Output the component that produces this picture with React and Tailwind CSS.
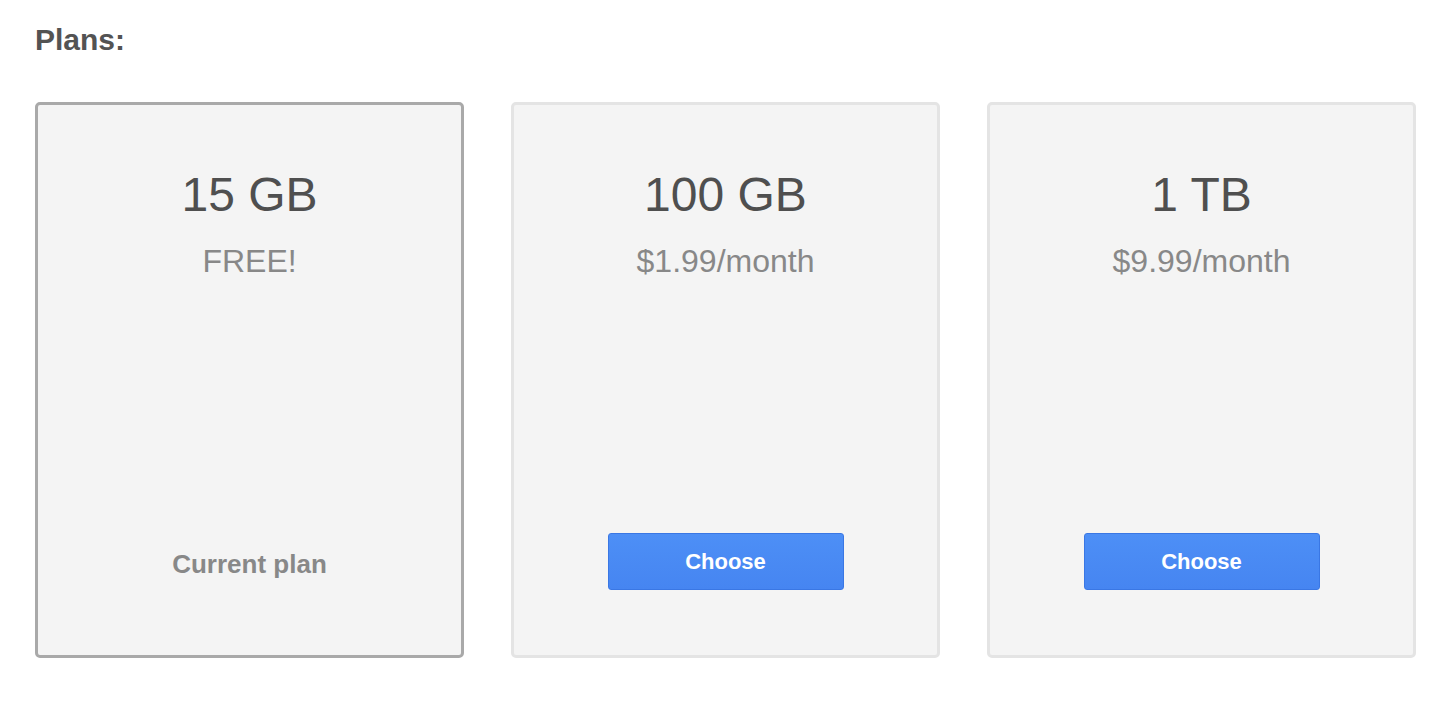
import React from 'react';

const plans = [
  { size: '15 GB', price: 'FREE!', current: true },
  { size: '100 GB', price: '$1.99/month' },
  { size: '1 TB', price: '$9.99/month' },
];

const App = () => {
  return (
    <div className="min-h-screen bg-white pl-[35px] pr-[26px] pt-[21px]" style={{ fontFamily: '"Liberation Sans", Arial, sans-serif' }}>
      <h2 className="text-[30px] font-bold leading-[38px] text-[#535353]">Plans:</h2>

      <div className="mt-[43px] flex gap-[47px]">
        {plans.map((plan) => (
          <div
            key={plan.size}
            className={`flex h-[556px] w-[429px] shrink-0 flex-col items-center rounded-[5px] border-[3px] bg-[#f4f4f4] ${
              plan.current ? 'border-[#a9a9a9]' : 'border-[#e4e4e4]'
            }`}
          >
            <div className="pt-[60px] text-[48px] leading-[60px] text-[#4f4f4f]">{plan.size}</div>
            <div className="mt-[18px] text-[32px] leading-[36px] text-[#888888]">{plan.price}</div>

            <div className="mt-auto mb-[65px]">
              {plan.current ? (
                <div className="pb-[10px] text-[26px] font-bold leading-[32px] text-[#888888]">Current plan</div>
              ) : (
                <button className="h-[57px] w-[236px] rounded-[3px] border border-[#3a77e4] bg-gradient-to-b from-[#4d8ff6] to-[#4685f1] text-[22px] font-bold text-white">
                  Choose
                </button>
              )}
            </div>
          </div>
        ))}
      </div>
    </div>
  );
};

export default App;
